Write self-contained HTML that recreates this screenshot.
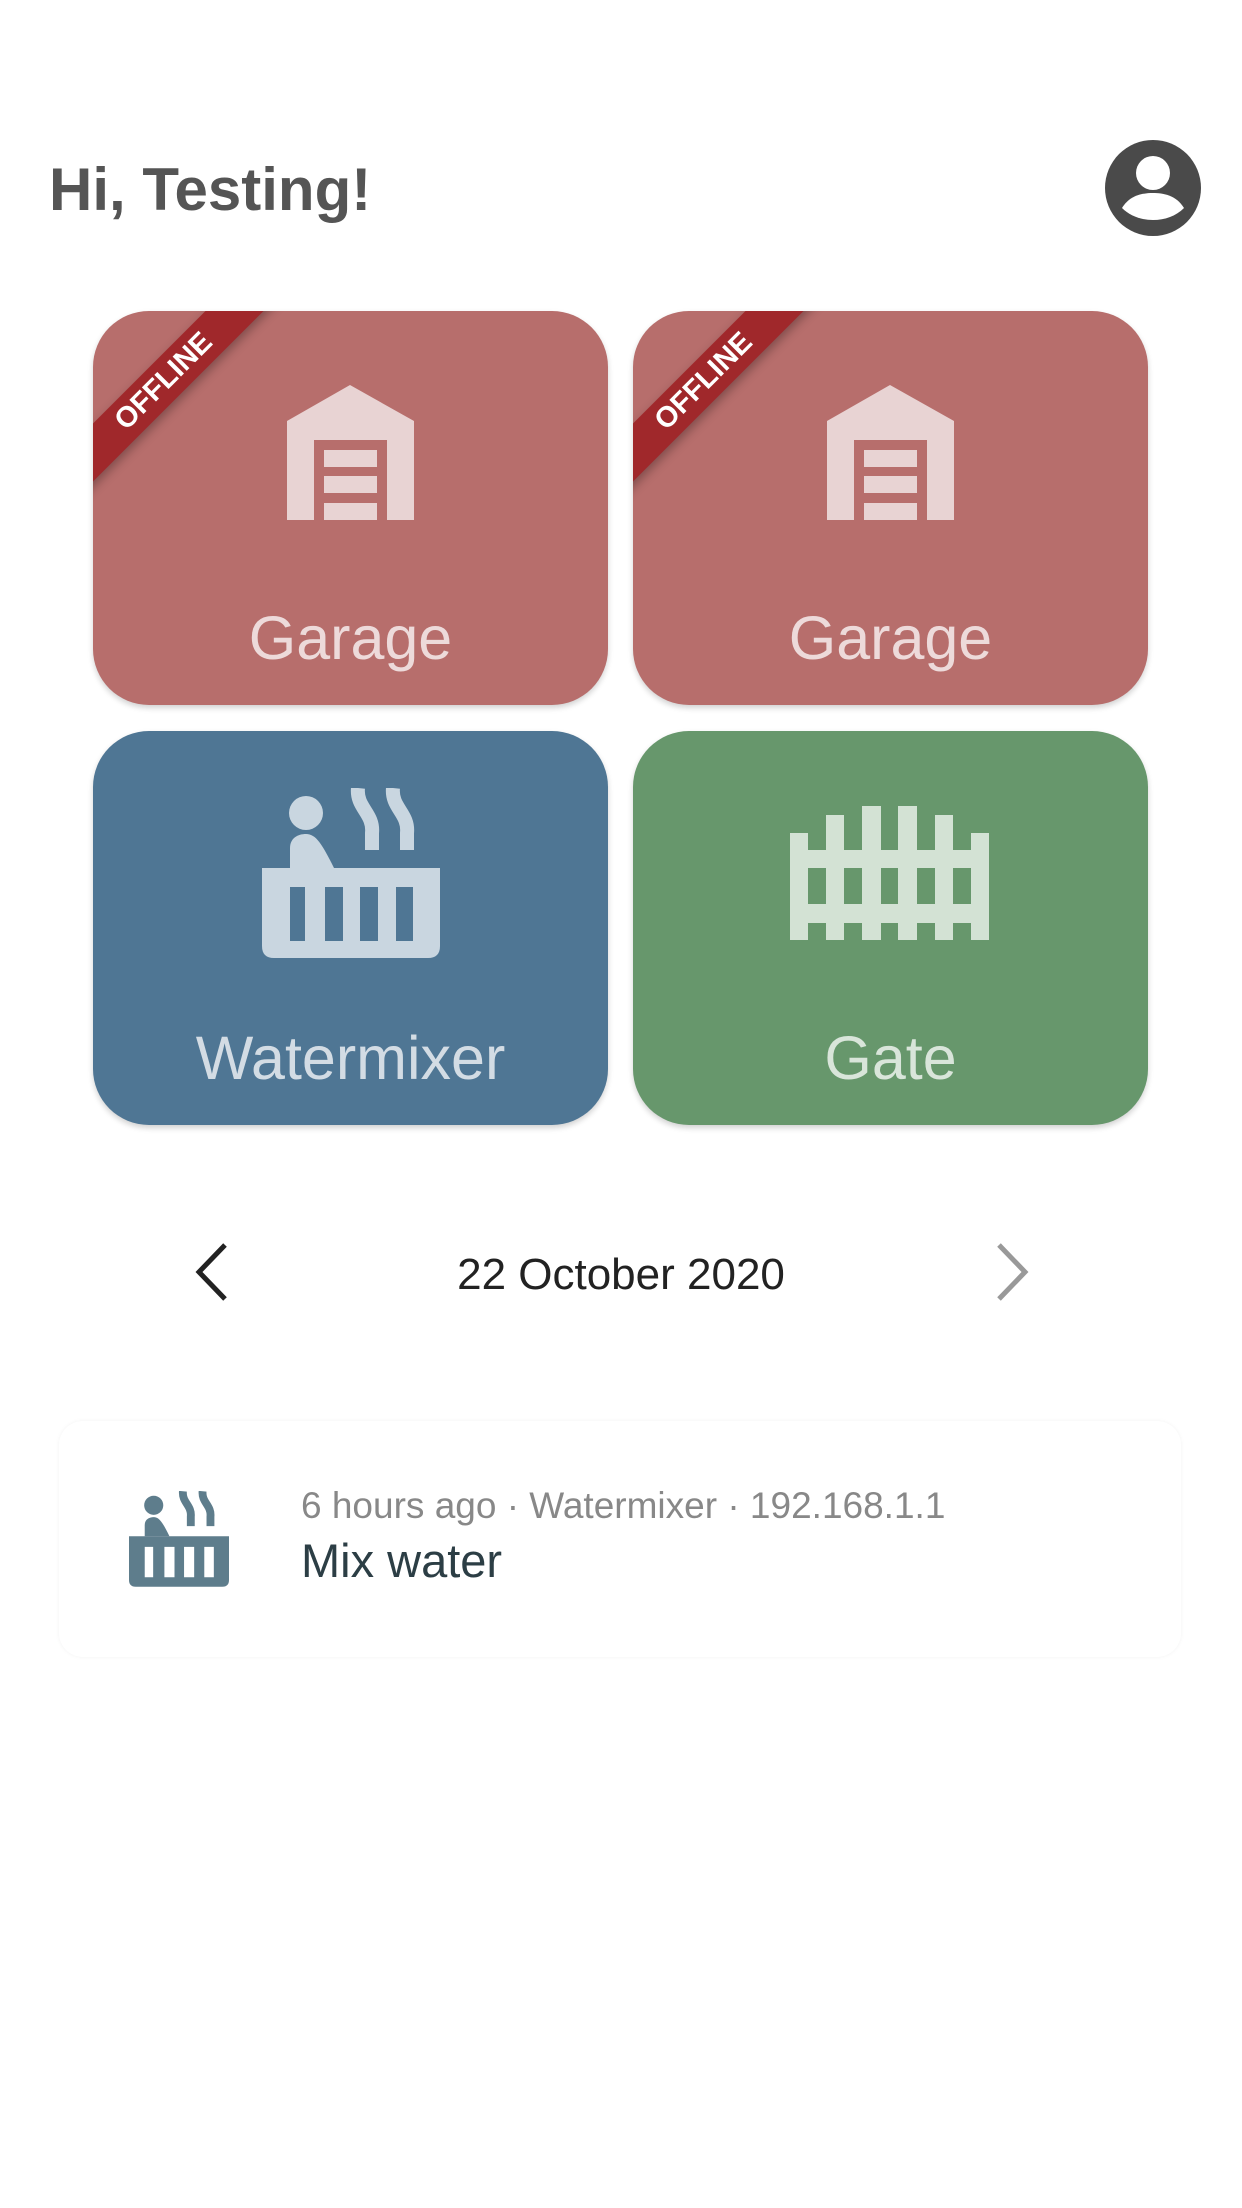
<!DOCTYPE html>
<html><head><meta charset="utf-8"><style>
*{margin:0;padding:0;box-sizing:border-box}
body{width:1242px;height:2208px;background:#fff;position:relative;overflow:hidden;font-family:"Liberation Sans",sans-serif}
.title{position:absolute;left:49px;top:155px;font-size:60px;color:#555;font-weight:bold}
.card{position:absolute;width:515px;height:394px;border-radius:56px;overflow:hidden;box-shadow:0 3px 6px rgba(0,0,0,.18)}
.red{background:#b76e6c}.blue{background:#4f7694}.green{background:#67976c}
.label{position:absolute;left:0;right:0;text-align:center;font-size:61px;color:rgba(255,255,255,.75)}
.rib{position:absolute;left:-79px;top:50px;width:300px;height:41px;background:#a0282b;transform:rotate(-45deg);color:#fff;font-weight:bold;font-size:29px;text-align:center;line-height:41px;box-shadow:0 4px 10px rgba(0,0,0,.3)}
svg{position:absolute}
</style></head><body>
<div class="title">Hi, Testing!</div>
<svg style="left:1105px;top:140px" width="96" height="96" viewBox="0 0 96 96"><circle cx="48" cy="48" r="48" fill="#4a4a4a"/><circle cx="48" cy="33" r="17" fill="#fff"/><path d="M17 68 C25 55 38 53 48 53 C58 53 71 55 79 68 C71 76 60 80 48 80 C36 80 25 76 17 68Z" fill="#fff"/></svg>

<div class="card red" style="left:93px;top:311px">
<svg style="left:194px;top:74px" width="127" height="135" viewBox="0 0 127 135"><path fill-rule="evenodd" fill="#e8d3d3" d="M63 0 L127 36 L127 135 L100 135 L100 55 L27 55 L27 135 L0 135 L0 36Z"/><rect x="37" y="65" width="53" height="17" fill="#e8d3d3"/><rect x="37" y="91" width="53" height="17" fill="#e8d3d3"/><rect x="37" y="118" width="53" height="17" fill="#e8d3d3"/></svg>
<div class="label" style="top:292px">Garage</div>
<div class="rib">OFFLINE</div></div>

<div class="card red" style="left:633px;top:311px">
<svg style="left:194px;top:74px" width="127" height="135" viewBox="0 0 127 135"><path fill-rule="evenodd" fill="#e8d3d3" d="M63 0 L127 36 L127 135 L100 135 L100 55 L27 55 L27 135 L0 135 L0 36Z"/><rect x="37" y="65" width="53" height="17" fill="#e8d3d3"/><rect x="37" y="91" width="53" height="17" fill="#e8d3d3"/><rect x="37" y="118" width="53" height="17" fill="#e8d3d3"/></svg>
<div class="label" style="top:292px">Garage</div>
<div class="rib">OFFLINE</div></div>

<div class="card blue" style="left:93px;top:731px">
<svg style="left:169px;top:57px" width="178" height="170" viewBox="0 0 178 170"><g fill="#c9d6e0"><circle cx="44" cy="25" r="17"/><path d="M28 80 L28 60 C28 50 36 46 44 46 C54 46 60 56 72 80Z"/><path fill-rule="evenodd" d="M0 80 H178 V158 Q178 170 166 170 H12 Q0 170 0 158Z M28 99 V153 H43 V99Z M63 99 V153 H81 V99Z M98 99 V153 H116 V99Z M134 99 V153 H151 V99Z"/></g><g fill="none" stroke="#c9d6e0" stroke-width="14"><path d="M96 0 C94 20 112 25 110 45 L110 62"/><path d="M131 0 C129 20 147 25 145 45 L145 62"/></g></svg>
<div class="label" style="top:292px">Watermixer</div></div>

<div class="card green" style="left:633px;top:731px">
<svg style="left:157px;top:75px" width="199" height="134" viewBox="0 0 199 134"><g fill="#d3e2d4"><rect x="0" y="27" width="18" height="107"/><rect x="36" y="9" width="18" height="125"/><rect x="72" y="0" width="19" height="134"/><rect x="108" y="0" width="19" height="134"/><rect x="145" y="9" width="18" height="125"/><rect x="181" y="27" width="18" height="107"/><rect x="0" y="44" width="199" height="18"/><rect x="0" y="98" width="199" height="19"/></g></svg>
<div class="label" style="top:292px">Gate</div></div>

<svg style="left:190px;top:1242px" width="44" height="60" viewBox="0 0 44 60"><path d="M35 3 L9 30 L35 57" fill="none" stroke="#222" stroke-width="5"/></svg>
<div style="position:absolute;left:0;width:1242px;top:1250px;text-align:center;font-size:44px;color:#222">22 October 2020</div>
<svg style="left:990px;top:1242px" width="44" height="60" viewBox="0 0 44 60"><path d="M9 3 L35 30 L9 57" fill="none" stroke="#999" stroke-width="5"/></svg>

<div style="position:absolute;left:59px;top:1421px;width:1122px;height:236px;border-radius:24px;box-shadow:0 0 4px rgba(0,0,0,.05)"></div>
<svg style="left:129px;top:1491px" width="100" height="96" viewBox="0 0 178 170"><g fill="#5e7d8c"><circle cx="44" cy="25" r="17"/><path d="M28 80 L28 60 C28 50 36 46 44 46 C54 46 60 56 72 80Z"/><path fill-rule="evenodd" d="M0 80 H178 V158 Q178 170 166 170 H12 Q0 170 0 158Z M28 99 V153 H43 V99Z M63 99 V153 H81 V99Z M98 99 V153 H116 V99Z M134 99 V153 H151 V99Z"/></g><g fill="none" stroke="#5e7d8c" stroke-width="14"><path d="M96 0 C94 20 112 25 110 45 L110 62"/><path d="M131 0 C129 20 147 25 145 45 L145 62"/></g></svg>
<div style="position:absolute;left:301px;top:1485px;font-size:37px;color:#888">6 hours ago · Watermixer · 192.168.1.1</div>
<div style="position:absolute;left:301px;top:1533px;font-size:47px;color:#2c3e45">Mix water</div>
</body></html>
